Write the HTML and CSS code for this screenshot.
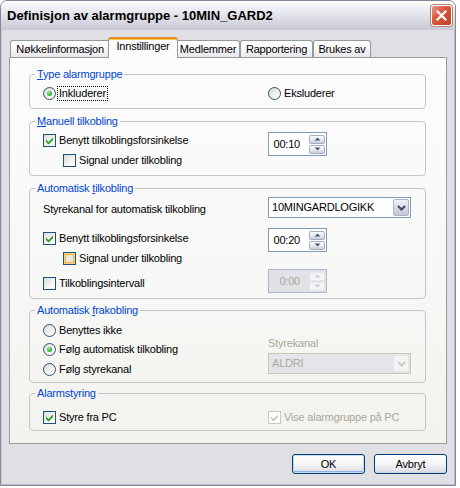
FILE: index.html
```html
<!DOCTYPE html>
<html>
<head>
<meta charset="utf-8">
<title>Definisjon av alarmgruppe</title>
<link rel="stylesheet" href="styles.css">
</head>
<body>
<div class="window">
  <div class="titlebar">
    <span class="title">Definisjon av alarmgruppe - 10MIN_GARD2</span>
    <span class="close"><svg width="11" height="11" viewBox="0 0 11 11"><path d="M1.5 1.5 L9.5 9.5 M9.5 1.5 L1.5 9.5" stroke="#fff" stroke-width="2.2" stroke-linecap="square"/></svg></span>
  </div>
  <div class="client">
    <div class="tabs">
      <div class="tab w1">Nøkkelinformasjon</div>
      <div class="tab sel">Innstillinger</div>
      <div class="tab w3">Medlemmer</div>
      <div class="tab w4">Rapportering</div>
      <div class="tab w5">Brukes av</div>
    </div>
    <div class="panel">

      <fieldset class="grp g1">
        <legend class="lgd"><u>T</u>ype alarmgruppe</legend>
        <div class="cols">
          <div class="col left">
            <div class="row mt6"><span class="radio"><span class="dot"></span></span><span class="lbl focus">Inkluderer</span></div>
          </div>
          <div class="col right">
            <div class="row mt6"><span class="radio"></span><span class="lbl">Eksluderer</span></div>
          </div>
        </div>
      </fieldset>

      <fieldset class="grp g2">
        <legend class="lgd"><u>M</u>anuell tilkobling</legend>
        <div class="cols">
          <div class="col left">
            <div class="row mt6"><span class="cb"><svg viewBox="0 0 11 11" width="11" height="11"><path d="M2 4.5 L4.5 7 L9 2.5 V5 L4.5 9.5 L2 7 Z"/></svg></span><span class="lbl">Benytt tilkoblingsforsinkelse</span></div>
            <div class="row mt7 ind"><span class="cb"></span><span class="lbl">Signal under tilkobling</span></div>
          </div>
          <div class="col right">
            <div class="spin mt4">
              <span class="val">00:10</span>
              <span class="sbtns">
                <span class="sbtn"><svg width="7" height="4" viewBox="0 0 7 4"><path d="M0.5 3.5 L3.5 0.5 L6.5 3.5 Z"/></svg></span>
                <span class="sbtn"><svg width="7" height="4" viewBox="0 0 7 4"><path d="M0.5 0.5 L3.5 3.5 L6.5 0.5 Z"/></svg></span>
              </span>
            </div>
          </div>
        </div>
      </fieldset>

      <fieldset class="grp g3">
        <legend class="lgd">Automatisk <u>t</u>ilkobling</legend>
        <div class="cols">
          <div class="col left">
            <div class="row mt8"><span class="text">Styrekanal for automatisk tilkobling</span></div>
            <div class="row mt16"><span class="cb"><svg viewBox="0 0 11 11" width="11" height="11"><path d="M2 4.5 L4.5 7 L9 2.5 V5 L4.5 9.5 L2 7 Z"/></svg></span><span class="lbl">Benytt tilkoblingsforsinkelse</span></div>
            <div class="row mt7 ind"><span class="cb hot"></span><span class="lbl">Signal under tilkobling</span></div>
            <div class="row mt12"><span class="cb"></span><span class="lbl">Tilkoblingsintervall</span></div>
          </div>
          <div class="col right">
            <div class="combo mt2">
              <span class="val">10MINGARDLOGIKK</span>
              <span class="drop"><svg width="9" height="6" viewBox="0 0 9 6"><path d="M1 1 L4.5 4.5 L8 1" fill="none" stroke-width="2"/></svg></span>
            </div>
            <div class="spin mt10">
              <span class="val">00:20</span>
              <span class="sbtns">
                <span class="sbtn"><svg width="7" height="4" viewBox="0 0 7 4"><path d="M0.5 3.5 L3.5 0.5 L6.5 3.5 Z"/></svg></span>
                <span class="sbtn"><svg width="7" height="4" viewBox="0 0 7 4"><path d="M0.5 0.5 L3.5 3.5 L6.5 0.5 Z"/></svg></span>
              </span>
            </div>
            <div class="spin dis mt17">
              <span class="val">0:00</span>
              <span class="sbtns">
                <span class="sbtn"><svg width="7" height="4" viewBox="0 0 7 4"><path d="M0.5 3.5 L3.5 0.5 L6.5 3.5 Z"/></svg></span>
                <span class="sbtn"><svg width="7" height="4" viewBox="0 0 7 4"><path d="M0.5 0.5 L3.5 3.5 L6.5 0.5 Z"/></svg></span>
              </span>
            </div>
          </div>
        </div>
      </fieldset>

      <fieldset class="grp g4">
        <legend class="lgd">Automatisk <u>f</u>rakobling</legend>
        <div class="cols">
          <div class="col left">
            <div class="row mt7"><span class="radio"></span><span class="lbl">Benyttes ikke</span></div>
            <div class="row mt6"><span class="radio"><span class="dot"></span></span><span class="lbl">Følg automatisk tilkobling</span></div>
            <div class="row mt7"><span class="radio"></span><span class="lbl">Følg styrekanal</span></div>
          </div>
          <div class="col right">
            <div class="row mt20"><span class="text disabled">Styrekanal</span></div>
            <div class="combo dis mt3">
              <span class="val">ALDRI</span>
              <span class="drop"><svg width="9" height="6" viewBox="0 0 9 6"><path d="M1 1 L4.5 4.5 L8 1" fill="none" stroke-width="2"/></svg></span>
            </div>
          </div>
        </div>
      </fieldset>

      <fieldset class="grp g5">
        <legend class="lgd">Alarmstyring</legend>
        <div class="cols">
          <div class="col left">
            <div class="row mt11"><span class="cb"><svg viewBox="0 0 11 11" width="11" height="11"><path d="M2 4.5 L4.5 7 L9 2.5 V5 L4.5 9.5 L2 7 Z"/></svg></span><span class="lbl">Styre fra PC</span></div>
          </div>
          <div class="col right">
            <div class="row mt11"><span class="cb dis"><svg viewBox="0 0 11 11" width="11" height="11"><path d="M2 4.5 L4.5 7 L9 2.5 V5 L4.5 9.5 L2 7 Z"/></svg></span><span class="lbl disabled">Vise alarmgruppe på PC</span></div>
          </div>
        </div>
      </fieldset>

    </div>
    <div class="footer">
      <span class="btn def">OK</span>
      <span class="btn">Avbryt</span>
    </div>
  </div>
</div>
</body>
</html>
```
FILE: styles.css
```css
html, body {
  margin: 0;
  padding: 0;
  background: #ffffff;
}
body {
  font-family: "Liberation Sans", Arial, sans-serif;
  font-size: 11px;
  letter-spacing: -0.2px;
  color: #000;
}

.window {
  width: 456px;
  height: 486px;
  box-sizing: border-box;
  border: 1px solid #85859b;
  border-radius: 7px 7px 0 0;
  background: #e0dfe3;
  overflow: hidden;
  display: flex;
  flex-direction: column;
  box-shadow: inset 1px 0 0 #c9c9d6, inset -1px 0 0 #b9b9c8, inset 0 -1px 0 #b9b9c8;
}

.titlebar {
  flex: none;
  height: 29px;
  display: flex;
  align-items: center;
  justify-content: space-between;
  padding: 0 3px 0 6px;
  background: linear-gradient(#ffffff 0%, #f4f4f7 15%, #e4e4ec 45%, #d6d6e0 75%, #c9c9d6 100%);
}
.title {
  font-family: "Liberation Sans", Arial, sans-serif;
  font-weight: bold;
  font-size: 13px;
  letter-spacing: 0;
  color: #000;
}
.close {
  width: 21px;
  height: 21px;
  box-sizing: border-box;
  border: 1px solid #ffffff;
  border-radius: 3px;
  background: linear-gradient(135deg, #eb9a86 0%, #d85a3f 40%, #c13d22 100%);
  box-shadow: 0 0 0 1px #b0896f;
  display: flex;
  align-items: center;
  justify-content: center;
}

.client {
  flex: 1;
  display: flex;
  flex-direction: column;
  padding: 7px 8px 0 8px;
}

/* Tabs */
.tabs {
  display: flex;
  align-items: flex-end;
  height: 20px;
  padding-left: 1px;
}
.tab {
  height: 17px;
  box-sizing: border-box;
  border: 1px solid #919b9c;
  border-bottom: none;
  border-radius: 3px 3px 0 0;
  background: linear-gradient(#ffffff, #fafafb 45%, #e6e6ec);
  text-align: center;
  line-height: 16px;
  white-space: nowrap;
}
.w1 { width: 100px; }
.w3 { width: 64px; }
.w4 { width: 73px; }
.w5 { width: 58px; }
.tab.sel {
  position: relative;
  z-index: 1;
  width: 70px;
  height: 21px;
  margin: 0 -2px -1px -2px;
  border-top: 2px solid #e68b2c;
  box-shadow: inset 0 1px 0 #ffc73c;
  background: #fcfcfd;
  line-height: 15px;
}

/* Panel */
.panel {
  height: 387px;
  box-sizing: border-box;
  border: 1px solid #919b9c;
  background: linear-gradient(#fcfcfd, #f7f7f5 60%, #f2f2ee);
  padding: 9px 0 0 19px;
  display: flex;
  flex-direction: column;
  align-items: flex-start;
}

.grp {
  margin: 0;
  padding: 0 0 8px 5px;
  width: 397px;
  min-width: 0;
  box-sizing: border-box;
  border: 1px solid #c5c5c8;
  border-radius: 4px;
}
.lgd {
  padding: 0 2px;
  line-height: 14px;
  color: #0046d5;
}
.g2 { margin-top: 5px; }
.g3 { margin-top: 5px; padding-bottom: 5px; }
.g4 { margin-top: 4px; padding-bottom: 6px; }
.g5 { margin-top: 3px; padding-bottom: 6px; }

.cols {
  display: flex;
  margin-left: 8px;
}
.col {
  display: flex;
  flex-direction: column;
  align-items: flex-start;
}
.left { width: 225px; flex: none; }

.row {
  display: flex;
  align-items: center;
  height: 13px;
  line-height: 13px;
  white-space: nowrap;
}
.ind { margin-left: 20px; }
.lbl { margin-left: 3px; }
.lbl.focus {
  margin-left: 2px;
  padding: 0 1px;
  outline: 1px dotted #000;
}
.disabled { color: #aca899; }

.mt2 { margin-top: 2px; }
.mt3 { margin-top: 3px; }
.mt4 { margin-top: 4px; }
.mt6 { margin-top: 6px; }
.mt7 { margin-top: 7px; }
.mt8 { margin-top: 8px; }
.mt10 { margin-top: 10px; }
.mt11 { margin-top: 11px; }
.mt12 { margin-top: 12px; }
.mt16 { margin-top: 16px; }
.mt17 { margin-top: 17px; }
.mt20 { margin-top: 20px; }

/* Checkbox */
.cb {
  flex: none;
  width: 13px;
  height: 13px;
  box-sizing: border-box;
  border: 1px solid #1c5180;
  background: linear-gradient(135deg, #dcdcd7 0%, #f4f4f2 60%, #ffffff 100%);
  display: flex;
}
.cb svg { display: block; fill: #21a121; }
.cb.hot {
  background: #e6e6e2;
  box-shadow: inset 0 0 0 1px #fcd47a, inset 0 0 0 2px #f5b342;
}
.cb.dis {
  border-color: #cac8bb;
  background: #ffffff;
}
.cb.dis svg { fill: #cac8bb; }

/* Radio */
.radio {
  flex: none;
  width: 13px;
  height: 13px;
  box-sizing: border-box;
  border: 1px solid #2f5174;
  border-radius: 50%;
  background: linear-gradient(135deg, #d6d6d2 0%, #f3f3f1 55%, #ffffff 100%);
  display: flex;
  align-items: center;
  justify-content: center;
}
.dot {
  width: 5px;
  height: 5px;
  border-radius: 50%;
  background: radial-gradient(circle at 35% 35%, #a6eba6 0%, #3cc23c 45%, #1d8c1d 100%);
}

/* Spin box */
.spin {
  width: 59px;
  height: 24px;
  box-sizing: border-box;
  border: 1px solid #7f9db9;
  background: #ffffff;
  display: flex;
  align-items: center;
  padding-right: 1px;
}
.spin .val {
  flex: 1;
  text-align: right;
  padding-right: 9px;
  line-height: 13px;
}
.sbtns {
  width: 16px;
  display: flex;
  flex-direction: column;
  gap: 1px;
}
.sbtn {
  height: 9px;
  box-sizing: border-box;
  border: 1px solid #a7adc4;
  border-radius: 2px;
  background: linear-gradient(#fdfdfe, #e4e5ee 60%, #c9ccdb);
  display: flex;
  align-items: center;
  justify-content: center;
}
.sbtn svg { display: block; fill: #4d5a78; }
.spin.dis {
  border-color: #a9b8cc;
  background: #e1e1e6;
}
.spin.dis .val { color: #aca899; }
.spin.dis .sbtn {
  border-color: #e4e4ea;
  background: #f4f4f6;
}
.spin.dis .sbtn svg { fill: #cfcdc2; }

/* Combo box */
.combo {
  width: 143px;
  height: 21px;
  box-sizing: border-box;
  border: 1px solid #7f9db9;
  background: #ffffff;
  display: flex;
  align-items: center;
  padding: 1px;
}
.combo .val {
  flex: 1;
  padding-left: 2px;
  line-height: 13px;
}
.drop {
  width: 16px;
  height: 17px;
  box-sizing: border-box;
  border: 1px solid #b1b5cc;
  border-radius: 2px;
  background: linear-gradient(#f1f2f7, #d7d9e6 55%, #c3c6d8);
  display: flex;
  align-items: center;
  justify-content: center;
}
.drop svg { display: block; stroke: #3e4a68; }
.combo.dis {
  border-color: #c9c7ba;
  background: #e4e4e9;
}
.combo.dis .val { color: #aca899; }
.combo.dis .drop {
  border-color: #e6e6ea;
  background: #f3f3f4;
}
.combo.dis .drop svg { stroke: #cdcbc0; }

/* Footer buttons */
.footer {
  display: flex;
  justify-content: flex-end;
  gap: 9px;
  margin-top: 10px;
}
.btn {
  width: 73px;
  height: 20px;
  box-sizing: border-box;
  border: 1px solid #003c74;
  border-radius: 3px;
  background: linear-gradient(#ffffff, #f3f3f5 55%, #dedee6 90%, #cfcfd8);
  display: flex;
  align-items: center;
  justify-content: center;
}
.btn.def {
  box-shadow: inset 0 0 0 1px #c9dcf7, inset 0 -2px 0 0 #90b1ea;
}
```
